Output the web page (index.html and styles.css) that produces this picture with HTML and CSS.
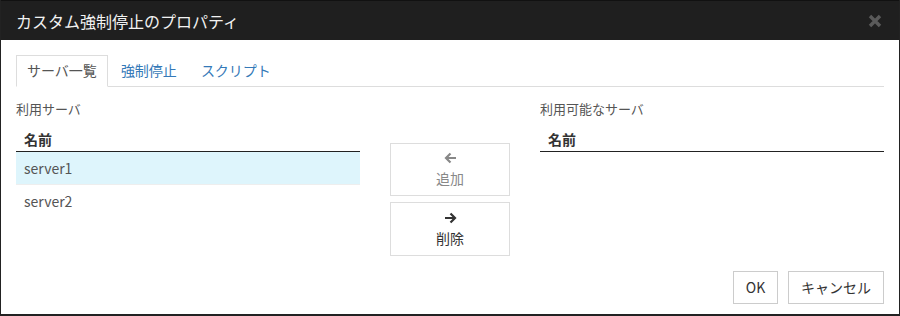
FILE: index.html
```html
<!DOCTYPE html>
<html lang="ja">
<head>
<meta charset="utf-8">
<title>カスタム強制停止のプロパティ</title>
<link rel="stylesheet" href="styles.css">
</head>
<body>
<div class="dialog">
  <div class="header">
    <span class="title">カスタム強制停止のプロパティ</span>
    <svg class="close" width="14" height="14" viewBox="0 0 14 14"><path d="M2 2L12 12M12 2L2 12" stroke="#5a5a5a" stroke-width="3.4" stroke-linecap="butt"/></svg>
  </div>
  <div class="content">
    <div class="tabs">
      <span class="tab active">サーバ一覧</span>
      <span class="tab">強制停止</span>
      <span class="tab">スクリプト</span>
    </div>
    <div class="main">
      <div class="col">
        <div class="label">利用サーバ</div>
        <div class="thead">名前</div>
        <div class="row selected">server1</div>
        <div class="row">server2</div>
      </div>
      <div class="mid">
        <div class="mbtn disabled">
          <svg width="13" height="12" viewBox="0 0 13 12"><path d="M12 6H2M6.5 1.5L2 6l4.5 4.5" fill="none" stroke="currentColor" stroke-width="2.2"/></svg>
          <span>追加</span>
        </div>
        <div class="mbtn">
          <svg width="13" height="12" viewBox="0 0 13 12"><path d="M1 6h10M6.5 1.5L11 6l-4.5 4.5" fill="none" stroke="currentColor" stroke-width="2.2"/></svg>
          <span>削除</span>
        </div>
      </div>
      <div class="col">
        <div class="label">利用可能なサーバ</div>
        <div class="thead">名前</div>
      </div>
    </div>
    <div class="footer">
      <span class="btn ok">OK</span>
      <span class="btn cancel">キャンセル</span>
    </div>
  </div>
</div>
</body>
</html>
```
FILE: styles.css
```css
html, body {
  margin: 0;
  padding: 0;
  background: #fff;
}
body {
  font-family: "Noto Sans CJK JP", "Noto Sans", sans-serif;
  font-size: 14px;
  color: #555;
}
.dialog {
  width: 900px;
  height: 316px;
  box-sizing: border-box;
  border-left: 1px solid #222;
  border-right: 1px solid #222;
  border-bottom: 2px solid #222;
  background: #fff;
  overflow: hidden;
}
.header {
  height: 40px;
  background: #1f1f1f;
  border-top: 1px solid #111;
  box-sizing: border-box;
  display: flex;
  align-items: center;
  justify-content: space-between;
  padding: 0 17px 0 15px;
}
.title {
  color: #f2f2f2;
  font-size: 16px;
  line-height: 20px;
}
.close {
  display: block;
}
.content {
  padding: 15px 15px 0 15px;
}
.tabs {
  display: flex;
  height: 31px;
  border-bottom: 1px solid #ddd;
}
.tab {
  display: block;
  height: 31px;
  box-sizing: border-box;
  padding: 0 10px;
  margin-right: 2px;
  border: 1px solid transparent;
  line-height: 29px;
  color: #3479b8;
  font-size: 14px;
}
.tab.active {
  border-color: #ddd;
  border-bottom-color: #fff;
  height: 32px;
  background: #fff;
  color: #555;
}
.main {
  display: flex;
  gap: 30px;
}
.col {
  width: 344px;
}
.label {
  margin-top: 12px;
  line-height: 20px;
  font-size: 13px;
  color: #555;
}
.thead {
  height: 33px;
  box-sizing: border-box;
  padding: 7px 0 0 8px;
  line-height: 26px;
  font-weight: bold;
  color: #333;
  border-bottom: 1px solid #222;
}
.row {
  height: 32px;
  line-height: 32px;
  padding-left: 8px;
  color: #555;
}
.row + .row {
  border-top: 1px solid #eee;
}
.row.selected {
  background: #def5fc;
}
.mid {
  width: 120px;
  padding-top: 56px;
  display: flex;
  flex-direction: column;
  gap: 6px;
}
.mbtn {
  height: 54px;
  box-sizing: border-box;
  border: 1px solid #ddd;
  display: flex;
  flex-direction: column;
  align-items: center;
  justify-content: center;
  gap: 5px;
  color: #333;
  font-size: 14px;
  line-height: 18px;
}
.mbtn.disabled {
  height: 53px;
  color: #888;
}
.mbtn svg {
  display: block;
}
.footer {
  display: flex;
  justify-content: flex-end;
  gap: 10px;
  margin-top: 15px;
}
.btn {
  display: block;
  height: 33px;
  box-sizing: border-box;
  border: 1px solid #ccc;
  line-height: 31px;
  text-align: center;
  color: #333;
  font-size: 14px;
}
.btn.ok {
  width: 45px;
}
.btn.cancel {
  width: 96px;
}
```
